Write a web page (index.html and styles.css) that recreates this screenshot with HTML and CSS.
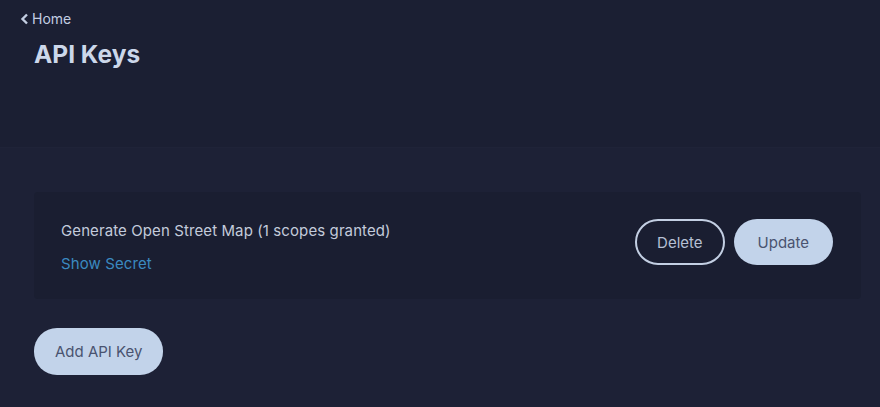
FILE: index.html
```html
<!DOCTYPE html>
<html lang="en">
	<head>
		<title>API Keys</title>
		<meta charset="utf-8">
		<link rel="stylesheet" href="styles.css">
	</head>
	<body>
		<header class="hdr">
			<a class="back" href="#"><svg width="9" height="12" viewBox="0 0 9 12"><path d="M7 1.5 L2.5 6 L7 10.5" fill="none" stroke="currentColor" stroke-width="2.4"/></svg>Home</a>
			<h1>API Keys</h1>
		</header>
		<main class="cnt">
			<div class="card">
				<div class="info">
					<div class="name">Generate Open Street Map (1 scopes granted)</div>
					<a class="secret" href="#">Show Secret</a>
				</div>
				<div class="acts">
					<button class="btn outline">Delete</button>
					<button class="btn fill">Update</button>
				</div>
			</div>
			<button class="btn fill add">Add API Key</button>
		</main>
	</body>
</html>
```
FILE: styles.css
```css
html, body {
	margin: 0;
	background-color: #1d2136;
	font-family: 'Inter', 'Noto Sans', sans-serif;
	color: #c9d5e9;
}
a {
	text-decoration: none;
}
.hdr {
	background-color: #1b1f33;
	height: 148px;
	padding: 10px 0 0 20px;
	box-sizing: border-box;
	border-bottom: 1px solid #1f2338;
}
.back {
	display: flex;
	align-items: center;
	gap: 3px;
	font-size: 14px;
	color: #c3cee2;
}
.hdr h1 {
	margin: 12px 0 0 14px;
	font-size: 24.5px;
	font-weight: 700;
	color: #ccd7ea;
}
.cnt {
	padding: 44px 19px 0 34px;
}
.card {
	display: flex;
	align-items: center;
	justify-content: space-between;
	background-color: #1a1e31;
	height: 107px;
	padding: 0 28px 0 27px;
	border-radius: 4px;
}
.info {
	padding-top: 2px;
}
.name {
	font-size: 15px;
	letter-spacing: 0.1px;
	color: #c3cbdb;
}
.secret {
	display: block;
	margin-top: 14px;
	font-size: 15px;
	letter-spacing: 0.1px;
	color: #3b8ac0;
}
.acts {
	display: flex;
	gap: 9px;
	margin-bottom: 7px;
}
.btn {
	font-family: inherit;
	font-size: 15px;
	height: 46px;
	border-radius: 23px;
	padding: 0 22px;
	cursor: pointer;
}
.outline {
	background: none;
	border: 2px solid #c3cfe3;
	color: #b6c0d4;
	padding: 0 20px;
}
.fill {
	background-color: #c2d3ea;
	border: none;
	color: #4a5370;
}
.acts .fill {
	padding: 0 24px;
}
.add {
	margin-top: 29px;
	height: 47px;
	padding: 0 21px;
}
```
